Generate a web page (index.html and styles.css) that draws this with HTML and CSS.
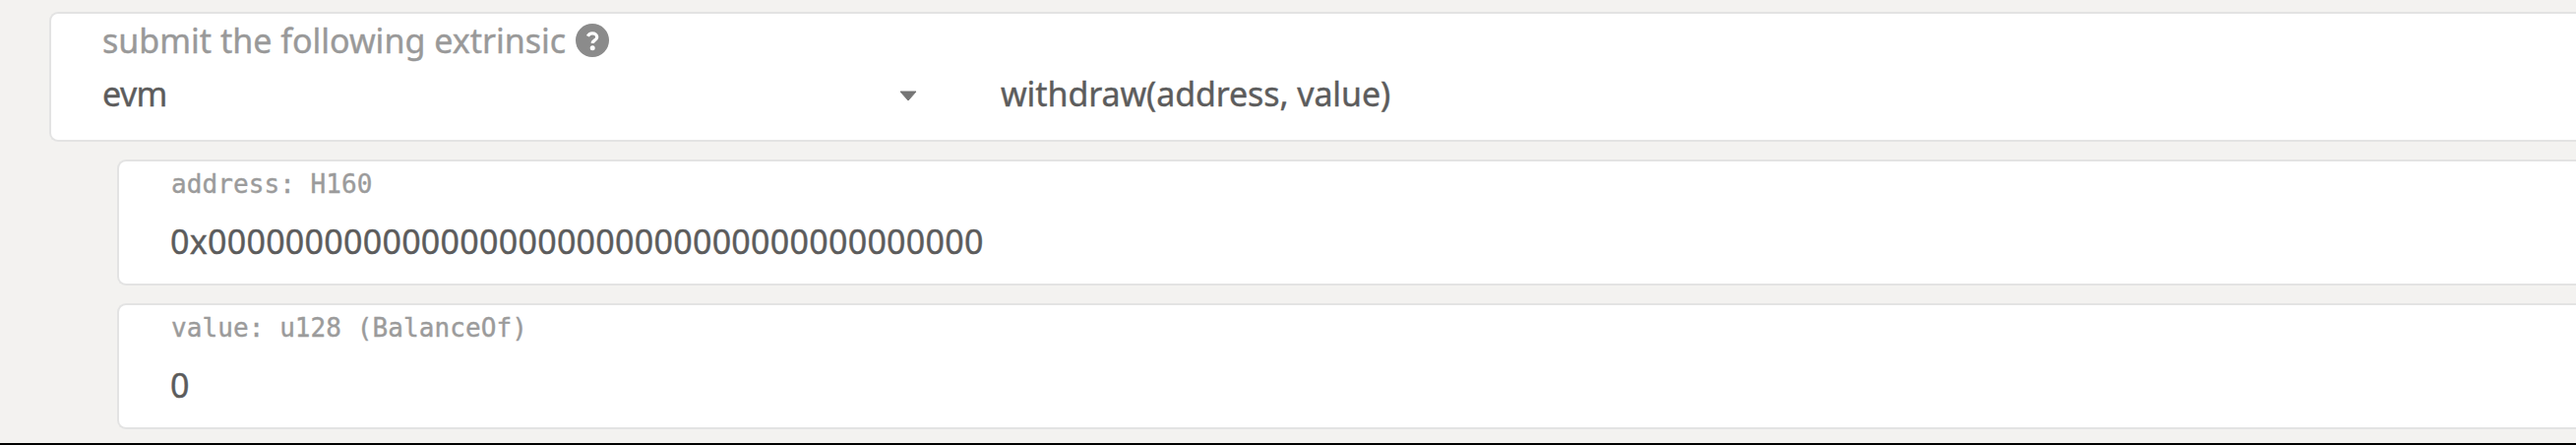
FILE: index.html
```html
<!DOCTYPE html>
<html lang="en">
<head>
<meta charset="utf-8">
<title>Extrinsics</title>
<link rel="stylesheet" href="styles.css">
</head>
<body>
<main class="page">
  <section class="card call">
    <div class="call-label">
      <span>submit the following extrinsic</span>
      <svg class="help" viewBox="0 0 34 34" aria-hidden="true">
        <circle cx="17" cy="17" r="17" fill="#8b8b8b"/>
        <path d="M12.4 12.8C13.4 10.7 15 9.9 17 9.9c2.7 0 4.7 1.5 4.7 3.8 0 3.3-4.4 3.2-4.4 6.2" fill="none" stroke="#fff" stroke-width="3.3"/>
        <circle cx="17.2" cy="24.7" r="2.5" fill="#fff"/>
      </svg>
    </div>
    <div class="call-row">
      <div class="section-select">
        <span class="value section">evm</span>
        <svg class="caret" viewBox="0 0 18 11" aria-hidden="true"><path d="M1 1h16L9 10z" fill="#757575" stroke="#757575" stroke-linejoin="round"/></svg>
      </div>
      <span class="value method">withdraw(address, value)</span>
    </div>
  </section>
  <div class="params">
    <section class="card param">
      <label class="param-label">address: H160</label>
      <div class="value digits">0x0000000000000000000000000000000000000000</div>
    </section>
    <section class="card param">
      <label class="param-label">value: u128 (BalanceOf)</label>
      <div class="value digits">0</div>
    </section>
  </div>
</main>
</body>
</html>
```
FILE: styles.css
```css
* { box-sizing: border-box; }

body {
  margin: 0;
  background: #f3f2f0;
  color: #5c5c5c;
  font-family: "Noto Sans", sans-serif;
  font-size: 34px;
  line-height: 40px;
  -webkit-text-stroke: 0.4px currentColor;
}

.page {
  height: 452px;
  padding: 12px 0 0 50px;
  border-bottom: 2px solid #000;
  overflow: hidden;
}

.card {
  background: #fff;
  border: 2px solid #e3e3e3;
  border-right: 0;
  border-radius: 9px 0 0 9px;
}

.call {
  height: 132px;
  padding: 7px 0 0 52px;
}

.call-label {
  display: flex;
  align-items: center;
  gap: 10px;
  color: #999;
}

.help {
  width: 34px;
  height: 34px;
}

.call-row {
  display: flex;
  margin-top: 14px;
}

.section-select {
  display: flex;
  align-items: center;
  justify-content: space-between;
  width: 828px;
}

.section { letter-spacing: -0.6px; }

.caret {
  width: 18px;
  height: 11px;
  margin-top: 4px;
}

.value { white-space: nowrap; }

.method {
  margin-left: 85px;
  letter-spacing: -0.1px;
}

.params {
  display: flex;
  flex-direction: column;
  gap: 18px;
  margin: 18px 0 0 69px;
}

.param {
  height: 128px;
  padding: 7px 0 0 52px;
}

.param-label {
  display: block;
  padding-left: 1px;
  color: #9b9b9b;
  font-family: "DejaVu Sans Mono", monospace;
  font-size: 26px;
  line-height: 32px;
  letter-spacing: 0.08px;
}

.digits {
  margin-top: 22px;
  letter-spacing: 0.27px;
}
```
